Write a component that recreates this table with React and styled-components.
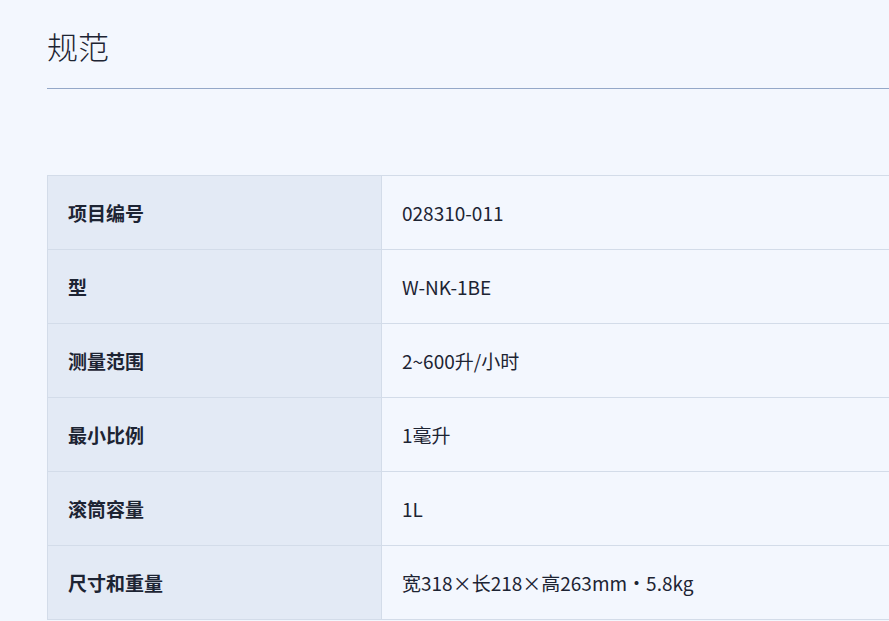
import React from 'react';
import styled, { createGlobalStyle } from 'styled-components';

const GlobalStyle = createGlobalStyle`
  html, body {
    margin: 0;
    padding: 0;
    background: #f3f7fe;
    overflow: hidden;
  }
  body {
    font-family: "Noto Sans CJK SC", "Noto Sans", sans-serif;
    color: #1d2433;
  }
`;

const Page = styled.div`
  width: 1200px;
  padding: 20px 0 0 47px;
`;

const Title = styled.h2`
  margin: 0;
  padding-bottom: 16px;
  font-size: 31px;
  font-weight: 300;
  line-height: 52px;
  color: #1d2433;
  border-bottom: 1px solid #94a8c8;
`;

const Table = styled.table`
  margin-top: 86px;
  width: 1100px;
  border-collapse: collapse;
  font-size: 19px;
`;

const Row = styled.tr`
  height: 74px;
`;

const Head = styled.th`
  width: 293px;
  padding: 0 20px;
  text-align: left;
  font-weight: 700;
  background: #e3eaf5;
  border: 1px solid #d3dce9;
  color: #1d2433;
`;

const Cell = styled.td`
  padding: 0 20px;
  background: #f3f7fe;
  border: 1px solid #d3dce9;
  color: #1d2433;
`;

const specs = [
  ['项目编号', '028310-011'],
  ['型', 'W-NK-1BE'],
  ['测量范围', '2~600升/小时'],
  ['最小比例', '1毫升'],
  ['滚筒容量', '1L'],
  ['尺寸和重量', '宽318×长218×高263mm・5.8kg'],
];

export default function App() {
  return (
    <Page>
      <GlobalStyle />
      <Title>规范</Title>
      <Table>
        <tbody>
          {specs.map(([k, v]) => (
            <Row key={k}>
              <Head>{k}</Head>
              <Cell>{v}</Cell>
            </Row>
          ))}
        </tbody>
      </Table>
    </Page>
  );
}
